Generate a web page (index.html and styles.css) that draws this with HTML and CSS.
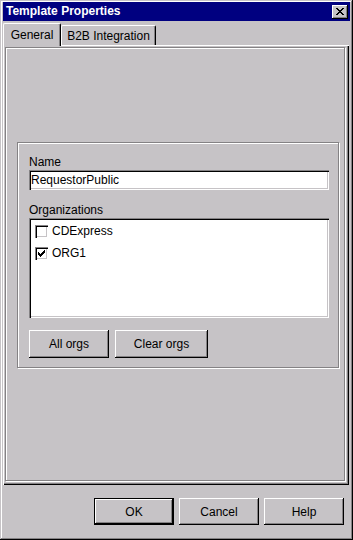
FILE: index.html
```html
<!DOCTYPE html>
<html>
<head>
<meta charset="utf-8">
<title>Template Properties</title>
<link rel="stylesheet" href="styles.css">
</head>
<body>
<div class="window">
  <div class="titlebar">
    <span class="title">Template Properties</span>
    <button class="close" aria-label="Close">
      <svg width="8" height="7" viewBox="0 0 8 7" shape-rendering="crispEdges"><path fill="#000" d="M0 0h2v1H0z M6 0h2v1H6z M1 1h2v1H1z M5 1h2v1H5z M2 2h4v1H2z M3 3h2v1H3z M2 4h4v1H2z M1 5h2v1H1z M5 5h2v1H5z M0 6h2v1H0z M6 6h2v1H6z"/></svg>
    </button>
  </div>
  <div class="tabs">
    <div class="tab tab-selected tab-general">General</div>
    <div class="tab tab-b2b">B2B Integration</div>
  </div>
  <div class="panel">
    <div class="etched">
      <div class="group">
        <div class="lbl">Name</div>
        <div class="field">RequestorPublic</div>
        <div class="lbl lbl-orgs">Organizations</div>
        <div class="list">
          <div class="item"><span class="cb"></span><span class="item-text">CDExpress</span></div>
          <div class="item"><span class="cb"><svg width="7" height="7" viewBox="0 0 7 7" shape-rendering="crispEdges"><path fill="#000" d="M6 0h1v1H6z M5 1h2v1H5z M0 2h1v1H0z M4 2h3v1H4z M0 3h2v1H0z M3 3h3v1H3z M0 4h5v1H0z M1 5h3v1H1z M2 6h1v1H2z"/></svg></span><span class="item-text">ORG1</span></div>
        </div>
        <div class="btnrow">
          <button class="btn btn-all">All orgs</button>
          <button class="btn btn-clear">Clear orgs</button>
        </div>
      </div>
    </div>
  </div>
  <div class="footer">
    <button class="btn btn-dlg btn-default">OK</button>
    <button class="btn btn-dlg">Cancel</button>
    <button class="btn btn-dlg">Help</button>
  </div>
</div>
</body>
</html>
```
FILE: styles.css
```css
* { box-sizing: border-box; }

html, body {
  margin: 0;
  padding: 0;
  background: #c6c3c6;
}

body {
  font-family: "Liberation Sans", Arial, sans-serif;
  font-size: 12px;
  color: #000;
}

.window {
  width: 353px;
  height: 540px;
  padding: 3px;
  background: #c6c3c6;
  box-shadow: inset -1px -1px 0 #000, inset 1px 1px 0 #c6c3c6,
              inset -2px -2px 0 #848284, inset 2px 2px 0 #fff;
  display: flex;
  flex-direction: column;
}

.titlebar {
  height: 19px;
  margin-top: -1px;
  background: #000080;
  display: flex;
  align-items: center;
  justify-content: space-between;
  padding: 0 2px 0 3px;
}

.title {
  color: #fff;
  font-weight: bold;
  font-size: 12px;
  line-height: 19px;
  white-space: nowrap;
}

.close {
  width: 16px;
  height: 14px;
  padding: 0;
  margin: 0;
  border: none;
  background: #c6c3c6;
  box-shadow: inset -1px -1px 0 #000, inset 1px 1px 0 #fff,
              inset -2px -2px 0 #848284;
  display: flex;
  align-items: flex-start;
  justify-content: flex-start;
}

.close svg {
  display: block;
  margin: 3px 0 0 4px;
}

.tabs {
  display: flex;
  align-items: flex-end;
  height: 22px;
  margin-top: 2px;
}

.tab {
  background: #c6c3c6;
  border-top: 1px solid #fff;
  border-left: 1px solid #fff;
  border-right: 1px solid #000;
  border-radius: 2px 2px 0 0;
  box-shadow: inset -1px 0 0 #848284;
  text-align: center;
  line-height: 14px;
  white-space: nowrap;
}

.tab-general {
  width: 58px;
}

.tab-b2b {
  width: 95px;
  height: 20px;
  padding-top: 3px;
}

.tab-selected {
  height: 23px;
  margin-bottom: -1px;
  padding-top: 4px;
  position: relative;
  z-index: 1;
}

.panel {
  width: 346px;
  height: 440px;
  padding: 2px 3px 3px 2px;
  background: #c6c3c6;
  box-shadow: inset 1px 1px 0 #fff, inset -1px -1px 0 #000,
              inset -2px -2px 0 #848284;
}

.etched {
  width: 340px;
  height: 434px;
  border: 1px solid #848284;
  box-shadow: inset 1px 1px 0 #fff, 1px 1px 0 #fff;
  padding-top: 94px;
  padding-left: 11px;
}

.group {
  width: 322px;
  border: 1px solid #848284;
  box-shadow: inset 1px 1px 0 #fff, 1px 1px 0 #fff;
  padding: 12px 9px 9px 11px;
}

.lbl {
  line-height: 14px;
  height: 14px;
  margin-bottom: 1px;
}

.lbl-orgs {
  margin-top: 13px;
}

.field {
  width: 300px;
  height: 20px;
  background: #fff;
  box-shadow: inset 1px 1px 0 #848284, inset 2px 2px 0 #000,
              inset -1px -1px 0 #fff, inset -2px -2px 0 #c6c3c6;
  padding-left: 2px;
  line-height: 20px;
  white-space: nowrap;
}

.list {
  width: 300px;
  height: 100px;
  background: #fff;
  box-shadow: inset 1px 1px 0 #848284, inset 2px 2px 0 #000,
              inset -1px -1px 0 #fff, inset -2px -2px 0 #c6c3c6;
  padding: 2px 0 0 6px;
}

.item {
  height: 22px;
  display: flex;
  align-items: center;
  gap: 4px;
}

.item-text {
  line-height: 14px;
}

.cb {
  width: 13px;
  height: 13px;
  flex: none;
  background: #fff;
  box-shadow: inset 1px 1px 0 #848284, inset 2px 2px 0 #000,
              inset -1px -1px 0 #fff, inset -2px -2px 0 #c6c3c6;
  padding: 3px 0 0 3px;
}

.cb svg {
  display: block;
}

.btnrow {
  display: flex;
  gap: 6px;
  margin-top: 12px;
}

.btn {
  font-family: "Liberation Sans", Arial, sans-serif;
  font-size: 12px;
  color: #000;
  background: #c6c3c6;
  border: none;
  margin: 0;
  padding: 0;
  box-shadow: inset -1px -1px 0 #000, inset 1px 1px 0 #fff,
              inset -2px -2px 0 #848284;
  height: 28px;
}

.btn-all {
  width: 80px;
}

.btn-clear {
  width: 93px;
}

.footer {
  display: flex;
  justify-content: flex-end;
  gap: 5px;
  padding: 13px 6px 0 0;
}

.btn-dlg {
  width: 80px;
  height: 27px;
}

.btn-default {
  border: 1px solid #000;
  box-shadow: inset -1px -1px 0 #000, inset 1px 1px 0 #fff,
              inset -2px -2px 0 #848284;
}
```
